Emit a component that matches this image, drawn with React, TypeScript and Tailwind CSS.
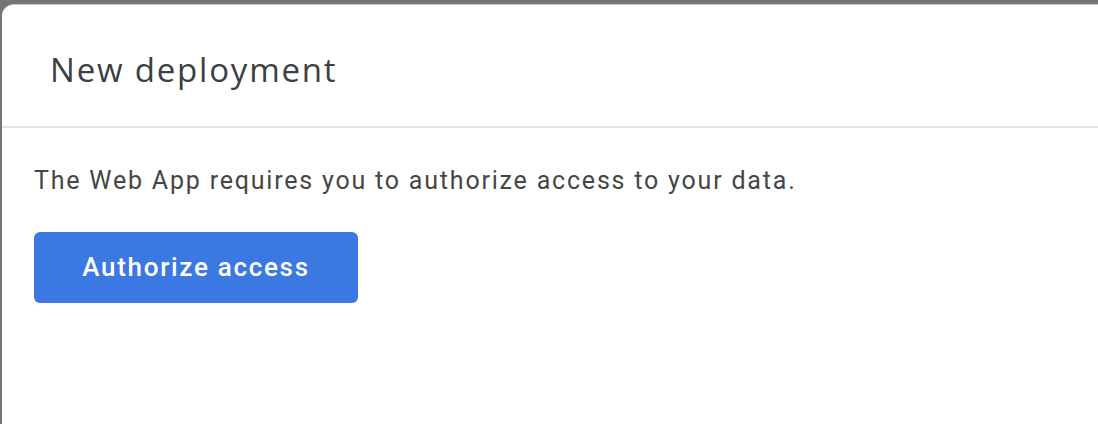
export default function App() {
  return (
    <div className="flex h-[448px] w-[1098px] flex-col overflow-hidden bg-white">
      <div className="flex h-[424px] bg-[#757575] pl-[2px] pt-[4px]">
        <div className="flex flex-1 flex-col overflow-hidden rounded-tl-[12px] border-t border-[#c8c8c8] bg-white">
          <div className="flex h-[123px] items-center border-b-2 border-[#e3e3e3] pb-[2px] pl-[48px] pt-[10px]">
            <h2
              className="text-[33px] leading-none tracking-[1.8px] text-[#3c4043]"
              style={{ fontFamily: '"Open Sans", Roboto, sans-serif' }}
            >
              New deployment
            </h2>
          </div>
          <div
            className="flex flex-col items-start pl-[32px] pt-[39px]"
            style={{ fontFamily: 'Roboto, "Noto Sans", sans-serif' }}
          >
            <p className="text-[25px] leading-[28px] tracking-[1.8px] text-[#444746]">
              The Web App requires you to authorize access to your data.
            </p>
            <button
              type="button"
              className="mt-[37px] h-[71px] w-[324px] rounded-[6px] bg-[#3b78e2] text-[26px] font-medium tracking-[1.7px] text-white"
            >
              Authorize access
            </button>
          </div>
        </div>
      </div>
    </div>
  );
}
